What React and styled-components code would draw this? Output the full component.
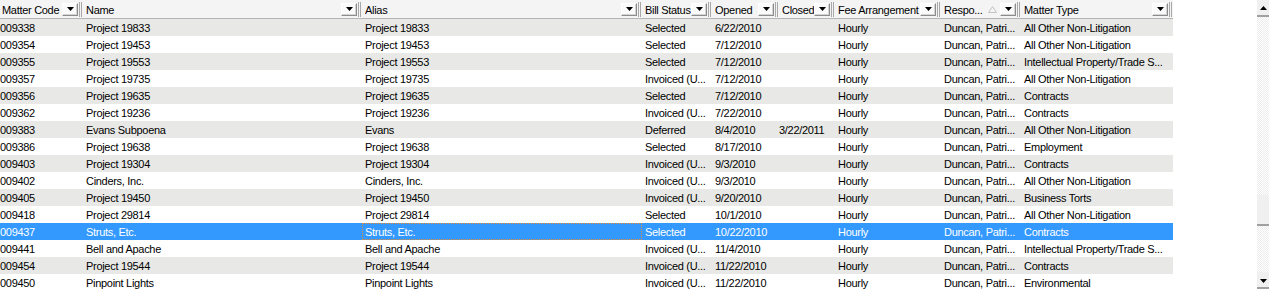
import React from "react";
import styled, { createGlobalStyle } from "styled-components";

const COLS = "83px 279px 280px 70px 67px 56px 106px 80px 152px";

const columns = [
  { title: "Matter Code", first: true },
  { title: "Name" },
  { title: "Alias" },
  { title: "Bill Status" },
  { title: "Opened" },
  { title: "Closed" },
  { title: "Fee Arrangement" },
  { title: "Respo...", sorted: true },
  { title: "Matter Type" },
];

const DUNCAN = "Duncan, Patri...";
const INV = "Invoiced (U...";
const NONLIT = "All Other Non-Litigation";
const IP = "Intellectual Property/Trade S...";

const rows = [
  ["009338", "Project 19833", "Project 19833", "Selected", "6/22/2010", "", NONLIT],
  ["009354", "Project 19453", "Project 19453", "Selected", "7/12/2010", "", NONLIT],
  ["009355", "Project 19553", "Project 19553", "Selected", "7/12/2010", "", IP],
  ["009357", "Project 19735", "Project 19735", INV, "7/12/2010", "", NONLIT],
  ["009356", "Project 19635", "Project 19635", "Selected", "7/12/2010", "", "Contracts"],
  ["009362", "Project 19236", "Project 19236", INV, "7/22/2010", "", "Contracts"],
  ["009383", "Evans Subpoena", "Evans", "Deferred", "8/4/2010", "3/22/2011", NONLIT],
  ["009386", "Project 19638", "Project 19638", "Selected", "8/17/2010", "", "Employment"],
  ["009403", "Project 19304", "Project 19304", INV, "9/3/2010", "", "Contracts"],
  ["009402", "Cinders, Inc.", "Cinders, Inc.", INV, "9/3/2010", "", NONLIT],
  ["009405", "Project 19450", "Project 19450", INV, "9/20/2010", "", "Business Torts"],
  ["009418", "Project 29814", "Project 29814", "Selected", "10/1/2010", "", NONLIT],
  ["009437", "Struts, Etc.", "Struts, Etc.", "Selected", "10/22/2010", "", "Contracts"],
  ["009441", "Bell and Apache", "Bell and Apache", INV, "11/4/2010", "", IP],
  ["009454", "Project 19544", "Project 19544", INV, "11/22/2010", "", "Contracts"],
  ["009450", "Pinpoint Lights", "Pinpoint Lights", INV, "11/22/2010", "", "Environmental"],
];

const SELECTED = 12;

function DownArrow() {
  return (
    <svg width="7" height="4" viewBox="0 0 7 4">
      <path d="M0 0h7L3.5 4z" fill="#000" />
    </svg>
  );
}

function UpArrow() {
  return (
    <svg width="7" height="4" viewBox="0 0 7 4">
      <path d="M0 4h7L3.5 0z" fill="#000" />
    </svg>
  );
}

function SortArrow() {
  return (
    <svg width="9" height="7" viewBox="0 0 9 7">
      <path d="M0.5 6.5h8L4.5 0.5z" fill="none" stroke="#c4c4c4" />
    </svg>
  );
}

function App() {
  return (
    <>
      <GlobalStyle />
      <Frame>
        <Grid>
          <HeaderRow>
            {columns.map((c) => (
              <HeaderCell key={c.title} $first={c.first}>
                <HeaderLabel>{c.title}</HeaderLabel>
                {c.sorted && <SortArrow />}
                <DropButton>
                  <DownArrow />
                </DropButton>
                <Separator />
              </HeaderCell>
            ))}
          </HeaderRow>
          {rows.map((r, i) => (
            <Row key={r[0]} $striped={i % 2 === 0} $selected={i === SELECTED}>
              <Cell $first>{r[0]}</Cell>
              <Cell>{r[1]}</Cell>
              <Cell $focus={i === SELECTED}>{r[2]}</Cell>
              <Cell>{r[3]}</Cell>
              <Cell>{r[4]}</Cell>
              <Cell $tight>{r[5]}</Cell>
              <Cell>Hourly</Cell>
              <Cell>{DUNCAN}</Cell>
              <Cell>{r[6]}</Cell>
            </Row>
          ))}
        </Grid>
        <Gap />
        <ScrollBar>
          <ScrollButton>
            <UpArrow />
          </ScrollButton>
          <Track $grow={180} />
          <Thumb />
          <Track $grow={46} />
          <ScrollButton $bottom>
            <DownArrow />
          </ScrollButton>
        </ScrollBar>
      </Frame>
    </>
  );
}

const GlobalStyle = createGlobalStyle`
  body {
    margin: 0;
    background: #fff;
    font-family: "Liberation Sans", Arial, sans-serif;
    font-size: 11px;
    letter-spacing: -0.3px;
    color: #000;
  }
`;

const Frame = styled.div`
  display: flex;
  width: 1269px;
  height: 289px;
  overflow: hidden;
  background: #fff;
`;

const Grid = styled.div`
  width: 1173px;
  flex: none;
  display: flex;
  flex-direction: column;
`;

const HeaderRow = styled.div`
  display: grid;
  grid-template-columns: ${COLS};
  height: 18px;
  flex: none;
  background: #f4f4f4;
  border-bottom: 1px solid #b4b4b4;
`;

const HeaderCell = styled.div`
  display: flex;
  align-items: center;
  padding-left: ${(p) => (p.$first ? "2px" : "3px")};
  overflow: hidden;
  > svg {
    margin-right: 3px;
    flex: none;
  }
`;

const HeaderLabel = styled.span`
  flex: 1;
  min-width: 0;
  white-space: nowrap;
  overflow: hidden;
  padding-top: 1px;
`;

const DropButton = styled.div`
  width: 16px;
  height: 13px;
  box-sizing: border-box;
  flex: none;
  display: flex;
  align-items: center;
  justify-content: center;
  background: #fafafa;
  border: 1px solid #fff;
  border-right-color: #8c8c8c;
  border-bottom-color: #8c8c8c;
  box-shadow: inset -1px -1px 0 #d4d4d4;
`;

const Separator = styled.div`
  width: 1px;
  height: 15px;
  flex: none;
  margin: 0 1px;
  border-left: 1px solid #a8a8a8;
  border-right: 1px solid #a8a8a8;
`;

const Row = styled.div`
  display: grid;
  grid-template-columns: ${COLS};
  height: 17px;
  flex: none;
  background: ${(p) => (p.$selected ? "#3399ff" : p.$striped ? "#e8e9e6" : "#fff")};
  color: ${(p) => (p.$selected ? "#fff" : "#000")};
`;

const Cell = styled.div`
  height: 17px;
  line-height: 16px;
  padding-top: 1px;
  box-sizing: border-box;
  padding-left: ${(p) => (p.$first || p.$tight ? "0" : "3px")};
  white-space: nowrap;
  overflow: hidden;
  outline: ${(p) => (p.$focus ? "1px dotted #e08a3a" : "none")};
  outline-offset: -1px;
`;

const Gap = styled.div`
  flex: 1;
`;

const ScrollBar = styled.div`
  width: 12px;
  flex: none;
  display: flex;
  flex-direction: column;
`;

const ScrollButton = styled.div`
  height: 17px;
  flex: none;
  box-sizing: border-box;
  display: flex;
  align-items: center;
  justify-content: center;
  background: #f0f0f0;
  border-bottom: 2px solid #a0a0a0;
  padding-top: ${(p) => (p.$bottom ? "2px" : "0")};
`;

const Track = styled.div`
  flex: ${(p) => p.$grow} 1 0;
  background-color: #fff;
  background-image: repeating-conic-gradient(#ececec 0 25%, #fff 0 50%);
  background-size: 2px 2px;
`;

const Thumb = styled.div`
  height: 31px;
  flex: none;
  box-sizing: border-box;
  background: #f0f0f0;
  border-bottom: 2px solid #a0a0a0;
`;

export default App;
